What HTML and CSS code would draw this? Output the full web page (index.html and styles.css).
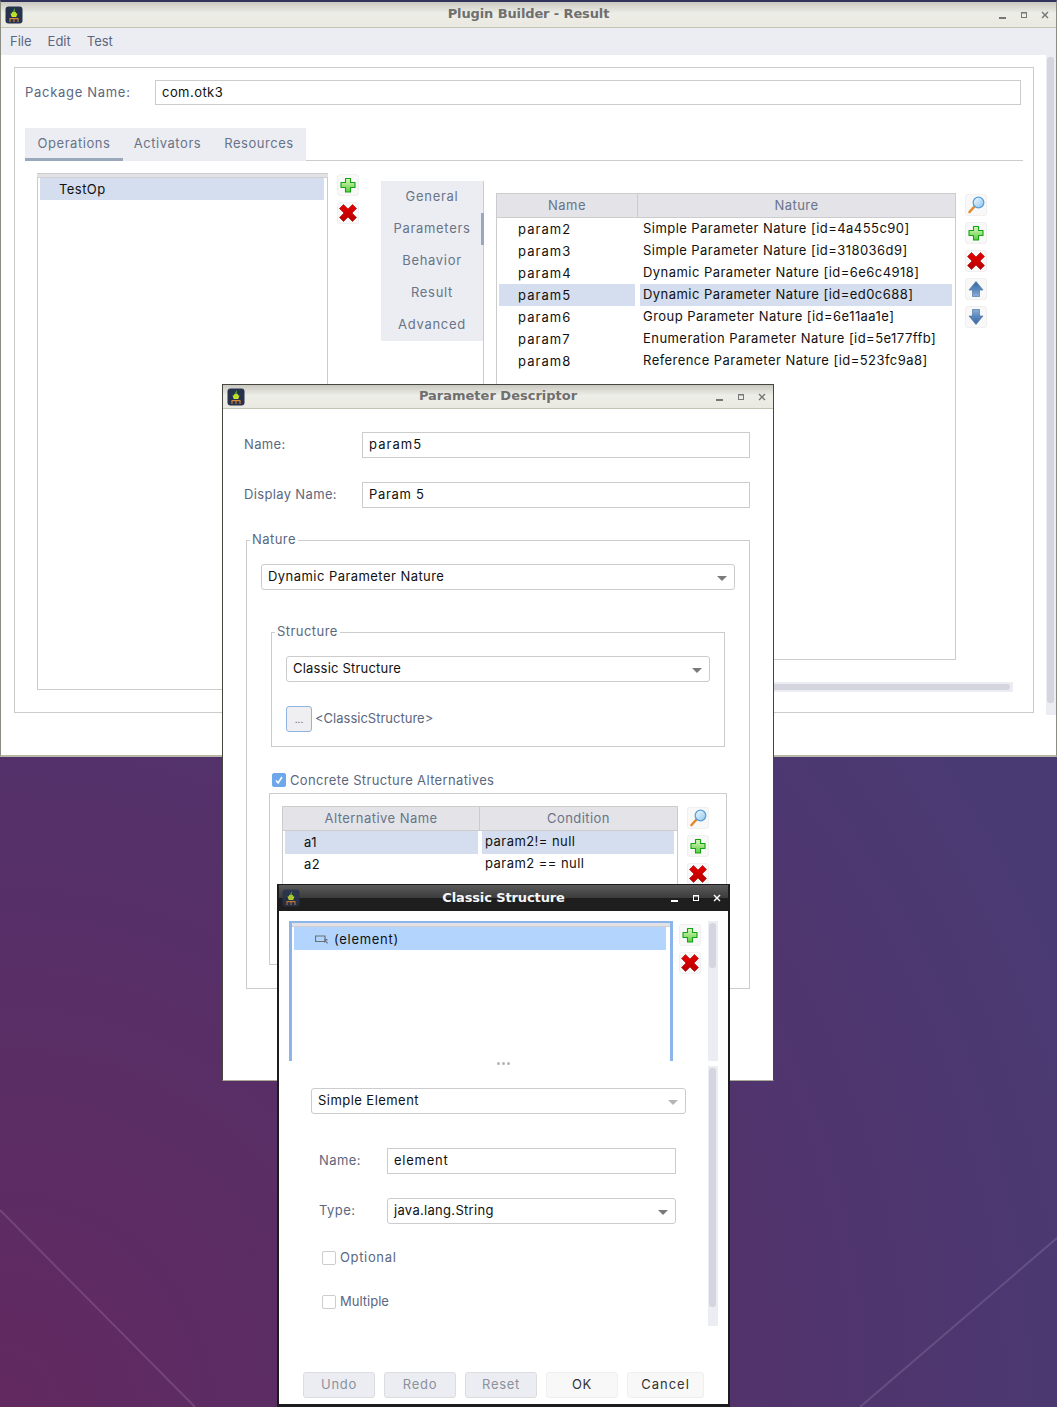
FILE: index.html
```html
<!DOCTYPE html>
<html lang="en">
<head>
<meta charset="utf-8">
<title>Plugin Builder - Result</title>
<link rel="stylesheet" href="styles.css">
</head>
<body>
<svg class="defs" width="0" height="0" aria-hidden="true">
  <defs>
    <linearGradient id="gGreen" x1="0" y1="0" x2="0" y2="1"><stop offset="0" stop-color="#dcf8c0"/><stop offset="1" stop-color="#62cc42"/></linearGradient>
    <linearGradient id="gRed" x1="0" y1="0" x2="0" y2="1"><stop offset="0" stop-color="#e60000"/><stop offset="1" stop-color="#b80000"/></linearGradient>
    <linearGradient id="gLens" x1="0" y1="0" x2="1" y2="1"><stop offset="0" stop-color="#f2fbff"/><stop offset="1" stop-color="#8cc6f0"/></linearGradient>
    <linearGradient id="gUp" x1="0" y1="0" x2="0" y2="1"><stop offset="0" stop-color="#36659f"/><stop offset=".6" stop-color="#5f8cc0"/><stop offset="1" stop-color="#8fb0d6"/></linearGradient>
    <linearGradient id="gDown" x1="0" y1="0" x2="0" y2="1"><stop offset="0" stop-color="#8fb0d6"/><stop offset=".4" stop-color="#5f8cc0"/><stop offset="1" stop-color="#36659f"/></linearGradient>
    <symbol id="i-plus" viewBox="0 0 22 22"><path d="M8.500 4.500h5v4h4.500v5h-4.500v4.500h-5v-4.500h-4.500v-5h4.500z" fill="url(#gGreen)" stroke="#12a312" stroke-width="1.100" stroke-linejoin="round"/></symbol>
    <symbol id="i-del" viewBox="0 0 22 22"><path d="M2.500 6.500 6.500 2.500 11 7 15.500 2.500 19.500 6.500 15 11 19.500 15.500 15.500 19.500 11 15 6.500 19.500 2.500 15.500 7 11z" fill="url(#gRed)" stroke="#a80000" stroke-width=".6"/></symbol>
    <symbol id="i-find" viewBox="0 0 22 22"><path d="M9.500 12.500 4.500 18" stroke="#e5892a" stroke-width="2.600" stroke-linecap="round"/><circle cx="13.500" cy="8.500" r="5.300" fill="url(#gLens)" stroke="#5c9ed4" stroke-width="1.300"/></symbol>
    <symbol id="i-up" viewBox="0 0 22 22"><path d="M11 3.500 18 12H14.500V18.500H7.500V12H4z" fill="url(#gUp)" stroke="#4f77a8" stroke-width=".7"/></symbol>
    <symbol id="i-down" viewBox="0 0 22 22"><path d="M11 18.500 18 10H14.500V3.500H7.500V10H4z" fill="url(#gDown)" stroke="#4f77a8" stroke-width=".7"/></symbol>
    <symbol id="i-app" viewBox="0 0 18 18"><rect x=".5" y=".5" width="17" height="17" rx="3" fill="#27324c"/><path d="M9.500 2 8.200 5.500h1.700z" fill="#4fc03a"/><path d="M5.500 7.500h7l-1.300 3.500H6.800z" fill="#d8e82c"/><circle cx="9" cy="7.800" r="2.300" fill="#b4e02c"/><path d="M4.500 12h9v1.200h-9z" fill="#d88a3c"/><path d="M5 13v3M9 13v3M13 13v3" stroke="#c87a34" stroke-width="1.200"/></symbol>
    <symbol id="i-min" viewBox="0 0 10 10"><rect x="1" y="7" width="7" height="2"/></symbol>
    <symbol id="i-max" viewBox="0 0 10 10"><path d="M2 2h6v6H2z M3 3.500v3.500h4V3.500z" fill-rule="evenodd"/></symbol>
    <symbol id="i-close" viewBox="0 0 10 10"><path d="M2.500 1.500 5 4l2.500-2.500 1 1L6 5l2.500 2.500-1 1L5 6 2.500 8.500l-1-1L4 5 1.500 2.500z"/></symbol>
  </defs>
</svg>

<svg class="wallpaper-lines" viewBox="0 0 1057 1407" aria-hidden="true">
  <path d="M0 1210 195 1407M1057 1238 860 1407"/>
</svg>

<section class="win win-main">
  <header class="titlebar">
    <svg class="app-icon"><use href="#i-app"/></svg>
    <div class="title">Plugin Builder - Result</div>
    <div class="win-ctl"><svg><use href="#i-min"/></svg><svg><use href="#i-max"/></svg><svg><use href="#i-close"/></svg></div>
  </header>
  <nav class="menubar"><span>File</span><span>Edit</span><span>Test</span></nav>
  <div class="main-body">
    <div class="main-panel">
      <div class="pkg-row">
        <label class="lbl lbl-pkg">Package Name:</label>
        <div class="field field-pkg">com.otk3</div>
      </div>
      <div class="tabbar">
        <div class="tabs">
          <span class="tab tab-op is-on">Operations</span>
          <span class="tab tab-act">Activators</span>
          <span class="tab tab-res">Resources</span>
        </div>
      </div>
      <div class="ops">
        <div class="list list-ops">
          <div class="list-strip"></div>
          <div class="list-row">TestOp</div>
        </div>
        <div class="icon-col icon-col-ops">
          <button class="ibtn"><svg><use href="#i-plus"/></svg></button>
          <button class="ibtn"><svg><use href="#i-del"/></svg></button>
        </div>
        <div class="side">
          <div class="side-tabs">
            <span class="side-tab">General</span>
            <span class="side-tab is-on">Parameters</span>
            <span class="side-tab">Behavior</span>
            <span class="side-tab">Result</span>
            <span class="side-tab">Advanced</span>
          </div>
        </div>
        <div class="params">
          <div class="params-top">
            <div class="tbl tbl-params">
              <div class="thead"><span>Name</span><span>Nature</span></div>
              <div class="trow"><span class="c1">param2</span><span class="c2">Simple Parameter Nature [id=4a455c90]</span></div>
              <div class="trow"><span class="c1">param3</span><span class="c2">Simple Parameter Nature [id=318036d9]</span></div>
              <div class="trow"><span class="c1">param4</span><span class="c2">Dynamic Parameter Nature [id=6e6c4918]</span></div>
              <div class="trow is-sel"><span class="c1">param5</span><span class="c2">Dynamic Parameter Nature [id=ed0c688]</span></div>
              <div class="trow"><span class="c1">param6</span><span class="c2">Group Parameter Nature [id=6e11aa1e]</span></div>
              <div class="trow"><span class="c1">param7</span><span class="c2">Enumeration Parameter Nature [id=5e177ffb]</span></div>
              <div class="trow"><span class="c1">param8</span><span class="c2">Reference Parameter Nature [id=523fc9a8]</span></div>
            </div>
            <div class="icon-col icon-col-params">
              <button class="ibtn"><svg><use href="#i-find"/></svg></button>
              <button class="ibtn"><svg><use href="#i-plus"/></svg></button>
              <button class="ibtn"><svg><use href="#i-del"/></svg></button>
              <button class="ibtn"><svg><use href="#i-up"/></svg></button>
              <button class="ibtn"><svg><use href="#i-down"/></svg></button>
            </div>
          </div>
          <div class="hscroll"><div class="hthumb"></div></div>
        </div>
      </div>
    </div>
    <div class="vscroll vscroll-main"><div class="vthumb"></div></div>
  </div>
</section>

<section class="win win-param">
  <header class="titlebar">
    <svg class="app-icon"><use href="#i-app"/></svg>
    <div class="title">Parameter Descriptor</div>
    <div class="win-ctl"><svg><use href="#i-min"/></svg><svg><use href="#i-max"/></svg><svg><use href="#i-close"/></svg></div>
  </header>
  <div class="param-body">
    <div class="form-row">
      <label class="lbl lbl-param">Name:</label>
      <div class="field field-param">param5</div>
    </div>
    <div class="form-row form-row-next">
      <label class="lbl lbl-param">Display Name:</label>
      <div class="field field-param">Param 5</div>
    </div>
    <fieldset class="group group-nature">
      <legend>Nature</legend>
      <div class="combo combo-nature"><span>Dynamic Parameter Nature</span><i class="caret"></i></div>
      <fieldset class="group group-structure">
        <legend>Structure</legend>
        <div class="combo combo-structure"><span>Classic Structure</span><i class="caret"></i></div>
        <div class="struct-row">
          <button class="dots-btn">...</button>
          <span class="lbl">&lt;ClassicStructure&gt;</span>
        </div>
      </fieldset>
      <div class="check-row check-alt">
        <span class="check is-on"><svg viewBox="0 0 14 14"><path d="M3.500 7.500 6 10.500 10.500 3.500"/></svg></span>
        <span class="lbl">Concrete Structure Alternatives</span>
      </div>
      <div class="alt-box">
        <div class="tbl tbl-alt">
          <div class="thead"><span>Alternative Name</span><span>Condition</span></div>
          <div class="trow is-sel"><span class="c1">a1</span><span class="c2">param2!= null</span></div>
          <div class="trow"><span class="c1">a2</span><span class="c2">param2 == null</span></div>
        </div>
        <div class="icon-col icon-col-alt">
          <button class="ibtn"><svg><use href="#i-find"/></svg></button>
          <button class="ibtn"><svg><use href="#i-plus"/></svg></button>
          <button class="ibtn"><svg><use href="#i-del"/></svg></button>
        </div>
      </div>
    </fieldset>
  </div>
</section>

<section class="win win-classic">
  <header class="titlebar titlebar-dark">
    <svg class="app-icon"><use href="#i-app"/></svg>
    <div class="title">Classic Structure</div>
    <div class="win-ctl"><svg><use href="#i-min"/></svg><svg><use href="#i-max"/></svg><svg><use href="#i-close"/></svg></div>
  </header>
  <div class="classic-top">
    <div class="list list-el">
      <div class="list-strip"></div>
      <div class="list-row">
        <svg class="el-icon" viewBox="0 0 14 9"><path d="M.5 1H10V6.500H.5z" fill="none" stroke="#6b7078" stroke-width="1.200"/><path d="M9.500 4h3v1.200h-1.800l2.300 2.800-.9.700-2-2.600V8H9.500z" fill="#6b7078"/></svg>
        <span>(element)</span>
      </div>
    </div>
    <div class="icon-col icon-col-el">
      <button class="ibtn"><svg><use href="#i-plus"/></svg></button>
      <button class="ibtn"><svg><use href="#i-del"/></svg></button>
    </div>
    <div class="vscroll vscroll-top"><div class="vthumb"></div></div>
  </div>
  <div class="splitter"><i></i><i></i><i></i></div>
  <div class="classic-lower">
    <div class="el-form">
      <div class="combo combo-kind"><span>Simple Element</span><i class="caret caret-soft"></i></div>
      <div class="form-row el-row el-row-name">
        <label class="lbl lbl-el">Name:</label>
        <div class="field field-el">element</div>
      </div>
      <div class="form-row el-row el-row-type">
        <label class="lbl lbl-el">Type:</label>
        <div class="combo combo-type"><span>java.lang.String</span><i class="caret"></i></div>
      </div>
      <div class="check-row el-check el-check-opt"><span class="check"></span><span class="lbl">Optional</span></div>
      <div class="check-row el-check el-check-mul"><span class="check"></span><span class="lbl">Multiple</span></div>
    </div>
    <div class="vscroll vscroll-lower"><div class="vthumb"></div></div>
  </div>
  <div class="actions">
    <button class="act is-off">Undo</button>
    <button class="act is-off">Redo</button>
    <button class="act is-off">Reset</button>
    <button class="act">OK</button>
    <button class="act act-wide">Cancel</button>
  </div>
</section>
</body>
</html>
```

FILE: styles.css
```css
* { box-sizing: border-box; }
html, body { margin: 0; padding: 0; }
body {
  position: relative;
  width: 1057px;
  height: 1407px;
  overflow: hidden;
  background: radial-gradient(circle at 0 100%, #622960 0, #54316a 650px, #4a3a73 1150px);
  font-family: Inter, "Open Sans", sans-serif;
  font-size: 13px;
  letter-spacing: .45px;
  color: #111;
}
.defs { position: absolute; }
.wallpaper-lines { position: absolute; inset: 0; width: 1057px; height: 1407px; }
.wallpaper-lines path { fill: none; stroke: rgba(255,255,255,.13); stroke-width: 2; }

.win { position: absolute; background: #fff; display: flex; flex-direction: column; }
.win-main { left: 0; top: 0; width: 1057px; height: 757px; border: 1px solid #8a8c80; border-top: 2px solid #31325c; border-bottom: 2px solid #b7b9a6; }
.win-param { left: 222px; top: 384px; width: 552px; height: 697px; border: 1px solid #45463f; border-bottom-color: #a9ab98; }
.win-classic { left: 277px; top: 884px; width: 453px; height: 523px; border: 2px solid #1c1c1e; border-top-width: 1px; border-bottom-width: 3px; }

.titlebar {
  flex: none;
  height: 26px;
  display: grid;
  grid-template-columns: 1fr auto 1fr;
  align-items: center;
  background: linear-gradient(#c8c8c0 0%, #eeeee8 45%, #e9e9e1 100%);
  border-bottom: 1px solid #c2c3b2;
  padding: 0 4px;
}
.win-param .titlebar { height: 24px; }
.title { font-family: "DejaVu Sans", sans-serif; font-weight: 700; font-size: 13px; letter-spacing: -.12px; color: #6f6f6f; padding-bottom: 2px; }
.win-param .title { letter-spacing: 0; }
.app-icon { width: 18px; height: 18px; justify-self: start; }
.win-ctl { justify-self: end; display: flex; gap: 11px; padding-right: 2px; fill: #777; }
.win-ctl svg { width: 10px; height: 10px; }
.titlebar-dark {
  height: 26px;
  background: linear-gradient(#5a5a5a 0%, #3d3d3d 48%, #1e1e1e 50%, #1e1e1e 100%);
  border-bottom: 0;
  padding: 0 3px;
}
.titlebar-dark .title { color: #f4f6f8; }
.titlebar-dark .win-ctl { fill: #fff; padding-right: 3px; }
.titlebar-dark .app-icon { opacity: .85; }

.menubar { flex: none; height: 27px; background: #ecedf2; display: flex; align-items: center; gap: 16px; padding: 0 0 2px 9px; color: #5b6780; letter-spacing: 0; }
.main-body { flex: 1; display: flex; align-items: flex-start; padding: 12px 0 0 13px; }
.main-panel { width: 1020px; height: 646px; border: 1px solid #ccc; padding: 12px 0 0 10px; }
.vscroll { flex: none; width: 10px; background: #ecedf2; padding: 2px 2px 0 1px; }
.vthumb { background: #d5d5e0; border-radius: 3px; }
.vscroll-main { height: 660px; margin: -12px 0 0 12px; }
.vscroll-main .vthumb { height: 646px; }

.lbl { color: #5b6780; }
.pkg-row .lbl, .form-row .lbl, .struct-row .lbl, .el-check .lbl { padding-bottom: 2px; }
.pkg-row, .form-row { display: flex; align-items: center; height: 26px; }
.pkg-row { height: 25px; }
.lbl-pkg { width: 130px; letter-spacing: .7px; }
.field { height: 100%; border: 1px solid #ccc; padding: 0 0 2px 6px; display: flex; align-items: center; background: #fff; }
.field-pkg { width: 866px; }

.tabbar { margin-top: 23px; width: 998px; height: 33px; border-bottom: 1px solid #ccc; }
.tabs { display: inline-flex; height: 33px; background: #ecedf2; color: #687488; }
.tab { display: flex; align-items: center; justify-content: center; height: 33px; border-bottom: 3px solid transparent; letter-spacing: .55px; }
.tab-op { width: 98px; }
.tab-act { width: 89px; }
.tab-res { width: 94px; }
.tab.is-on { border-bottom-color: #9aa8bb; }

.ops { display: flex; align-items: flex-start; margin: 12px 0 0 12px; }
.list { border: 1px solid #ccc; }
.list-ops { width: 291px; height: 517px; }
.list-strip { height: 4px; background: #e2e2e6; border-bottom: 1px solid #d0d0d4; margin-bottom: 0; }
.list-ops .list-strip { margin-left: -1px; margin-right: -1px; }
.list-row { height: 23px; display: flex; align-items: center; }
.list-ops .list-row { height: 22px; margin: 0 3px 0 2px; padding-left: 19px; background: #d4deef; }

.icon-col { flex: none; width: 22px; display: flex; flex-direction: column; gap: 6px; }
.icon-col-ops { margin: 1px 0 0 9px; }
.ibtn { width: 22px; height: 22px; padding: 0; border: 1px solid #f0f0f0; border-radius: 3px; background: #f8f8f8; display: block; }
.ibtn svg { width: 22px; height: 22px; display: block; margin: -1px; }

.side { width: 103px; margin: 8px 0 0 22px; height: 479px; border-right: 1px solid #ccc; }
.side-tabs { background: #ecedf2; height: 160px; display: flex; flex-direction: column; color: #687488; }
.side-tab { flex: none; height: 32px; display: flex; align-items: center; justify-content: center; padding: 0 0 3px 2px; margin-right: -1px; border-right: 3px solid transparent; letter-spacing: .7px; }
.side-tab.is-on { border-right-color: #9aa8bb; }

.params { margin: 20px 0 0 12px; width: 517px; }
.params-top { display: flex; align-items: flex-start; gap: 9px; }
.hscroll { margin-top: 22px; height: 10px; background: #ecedf2; padding: 2px 3px 2px 0; }
.hthumb { height: 6px; background: #d5d5e0; border-radius: 3px; }

.tbl { border: 1px solid #ccc; flex: none; }
.tbl-params { width: 460px; height: 467px; }
.thead { display: grid; height: 24px; background: #e3e3e8; border-bottom: 1px solid #ccc; color: #687488; }
.thead span { display: flex; align-items: center; justify-content: center; padding-bottom: 1px; border-right: 1px solid #ccc; }
.thead span:last-child { border-right: 0; }
.trow { display: grid; height: 22px; }
.trow span { display: flex; align-items: center; }
.tbl-params .thead, .tbl-params .trow { grid-template-columns: 141px 317px; }
.trow .c1 { margin: 0 3px 0 2px; padding-left: 19px; padding-bottom: 1px; }
.tbl-params .c1 { letter-spacing: 1.050px; }
.trow .c2 { margin: 0 3px 0 2px; padding-left: 3px; padding-bottom: 3px; white-space: nowrap; }
.trow.is-sel span { background: #d4deef; }
.icon-col-params { margin-top: 1px; }

.param-body { padding: 23px 0 0 21px; }
.lbl-param { width: 118px; letter-spacing: .35px; }
.field-param { width: 388px; letter-spacing: 1.050px; }
.form-row-next .field-param { letter-spacing: .7px; }
.form-row-next { margin-top: 24px; }
.group { margin: 0; border: 1px solid #ccc; padding: 16px 0 0 14px; min-width: 0; }
.group legend { padding: 0 2px; margin-left: -11px; line-height: 14px; height: 16px; color: #5b6780; }
.group-nature { margin: 24px 0 0 2px; width: 504px; height: 457px; }
.group-structure { margin: 34px 0 0 10px; width: 454px; height: 123px; }
.combo { height: 26px; border: 1px solid #ccc; border-radius: 3px; background: #fff; padding: 0 7px 0 6px; display: flex; align-items: center; justify-content: space-between; }
.combo span { padding-bottom: 2px; }
.combo-nature { width: 474px; }
.combo-structure { width: 424px; letter-spacing: .2px; }
.caret { width: 0; height: 0; border-left: 5px solid transparent; border-right: 5px solid transparent; border-top: 5px solid #7a7a7a; margin-top: 2px; }
.caret-soft { border-top-color: #b5b5b5; }
.struct-row { display: flex; align-items: center; gap: 3px; margin-top: 24px; height: 26px; letter-spacing: 0; }
.dots-btn { width: 26px; height: 26px; padding: 0; border: 1px solid #8fb4e2; border-radius: 3px; background: #efeff1; color: #555; font: inherit; font-size: 10px; letter-spacing: 0; }

.check-row { display: flex; align-items: center; gap: 4px; height: 16px; }
.check-alt { margin: 25px 0 0 11px; letter-spacing: .35px; }
.check { width: 14px; height: 14px; border: 1px solid #ccc; border-radius: 2px; background: #fff; flex: none; display: block; }
.check.is-on { background: #6fa8ea; border-color: #6fa8ea; }
.check svg { display: block; width: 12px; height: 12px; }
.check svg path { fill: none; stroke: #fff; stroke-width: 1.800; }
.alt-box { margin: 5px 0 0 8px; width: 458px; height: 172px; border: 1px solid #ccc; padding: 12px 0 0 12px; display: flex; align-items: flex-start; gap: 9px; }
.icon-col-alt { margin-top: 1px; }
.tbl-alt { width: 396px; height: 200px; }
.tbl-alt .thead, .tbl-alt .trow { grid-template-columns: 197px 197px; }
.tbl-alt .thead { height: 24px; }
.tbl-alt .trow .c1 { margin: 0 2px 0 2px; padding-left: 19px; }
.tbl-alt .trow { height: 22px; }
.tbl-alt .trow.is-sel .c1 { height: 23px; }

.classic-top { flex: none; display: flex; align-items: flex-start; padding: 10px 0 0 10px; height: 150px; }
.list-el { flex: none; width: 384px; height: 140px; border: 3px solid #8db5ea; border-top-width: 2px; border-bottom: 0; background: #fff; }
.list-el .list-strip { height: 4px; }
.list-el .list-row { margin: 0 4px 0 2px; height: 23px; padding-left: 21px; gap: 5px; background: #b3d4fc; letter-spacing: .7px; }
.el-icon { width: 14px; height: 9px; flex: none; margin-top: 2px; }
.icon-col-el { margin: 3px 0 0 6px; }
.vscroll-top { height: 140px; margin-left: 7px; }
.vscroll-top .vthumb { height: 45px; }
.splitter { flex: none; height: 5px; display: flex; justify-content: center; align-items: center; gap: 2px; }
.splitter i { width: 3px; height: 3px; border-radius: 50%; background: #b5b5b5; }
.classic-lower { flex: none; display: flex; align-items: flex-start; padding-left: 10px; }
.el-form { width: 419px; padding: 22px 0 0 22px; }
.combo-kind { width: 375px; }
.el-row { margin-left: 8px; }
.el-row-name { margin-top: 34px; }
.el-row-type { margin-top: 24px; }
.lbl-el { width: 68px; }
.field-el { width: 289px; letter-spacing: .75px; }
.combo-type { width: 289px; letter-spacing: .3px; }
.el-check { margin-left: 11px; }
.el-check-opt { margin-top: 26px; letter-spacing: .65px; }
.el-check-mul { margin-top: 28px; letter-spacing: 0; }
.vscroll-lower { height: 260px; }
.vscroll-lower .vthumb { height: 239px; }
.actions { flex: none; display: flex; gap: 9px; padding-left: 24px; margin-top: 46px; }
.act { width: 72px; height: 26px; padding: 0 0 2px; border: 1px solid #efefef; border-radius: 3px; background: #f8f8f8; color: #333; font: inherit; letter-spacing: .7px; }
.act.is-off { background: #ecedf2; border-color: #dcdcdf; color: #8b919b; }
.act-wide { width: 77px; letter-spacing: 1px; }
```
